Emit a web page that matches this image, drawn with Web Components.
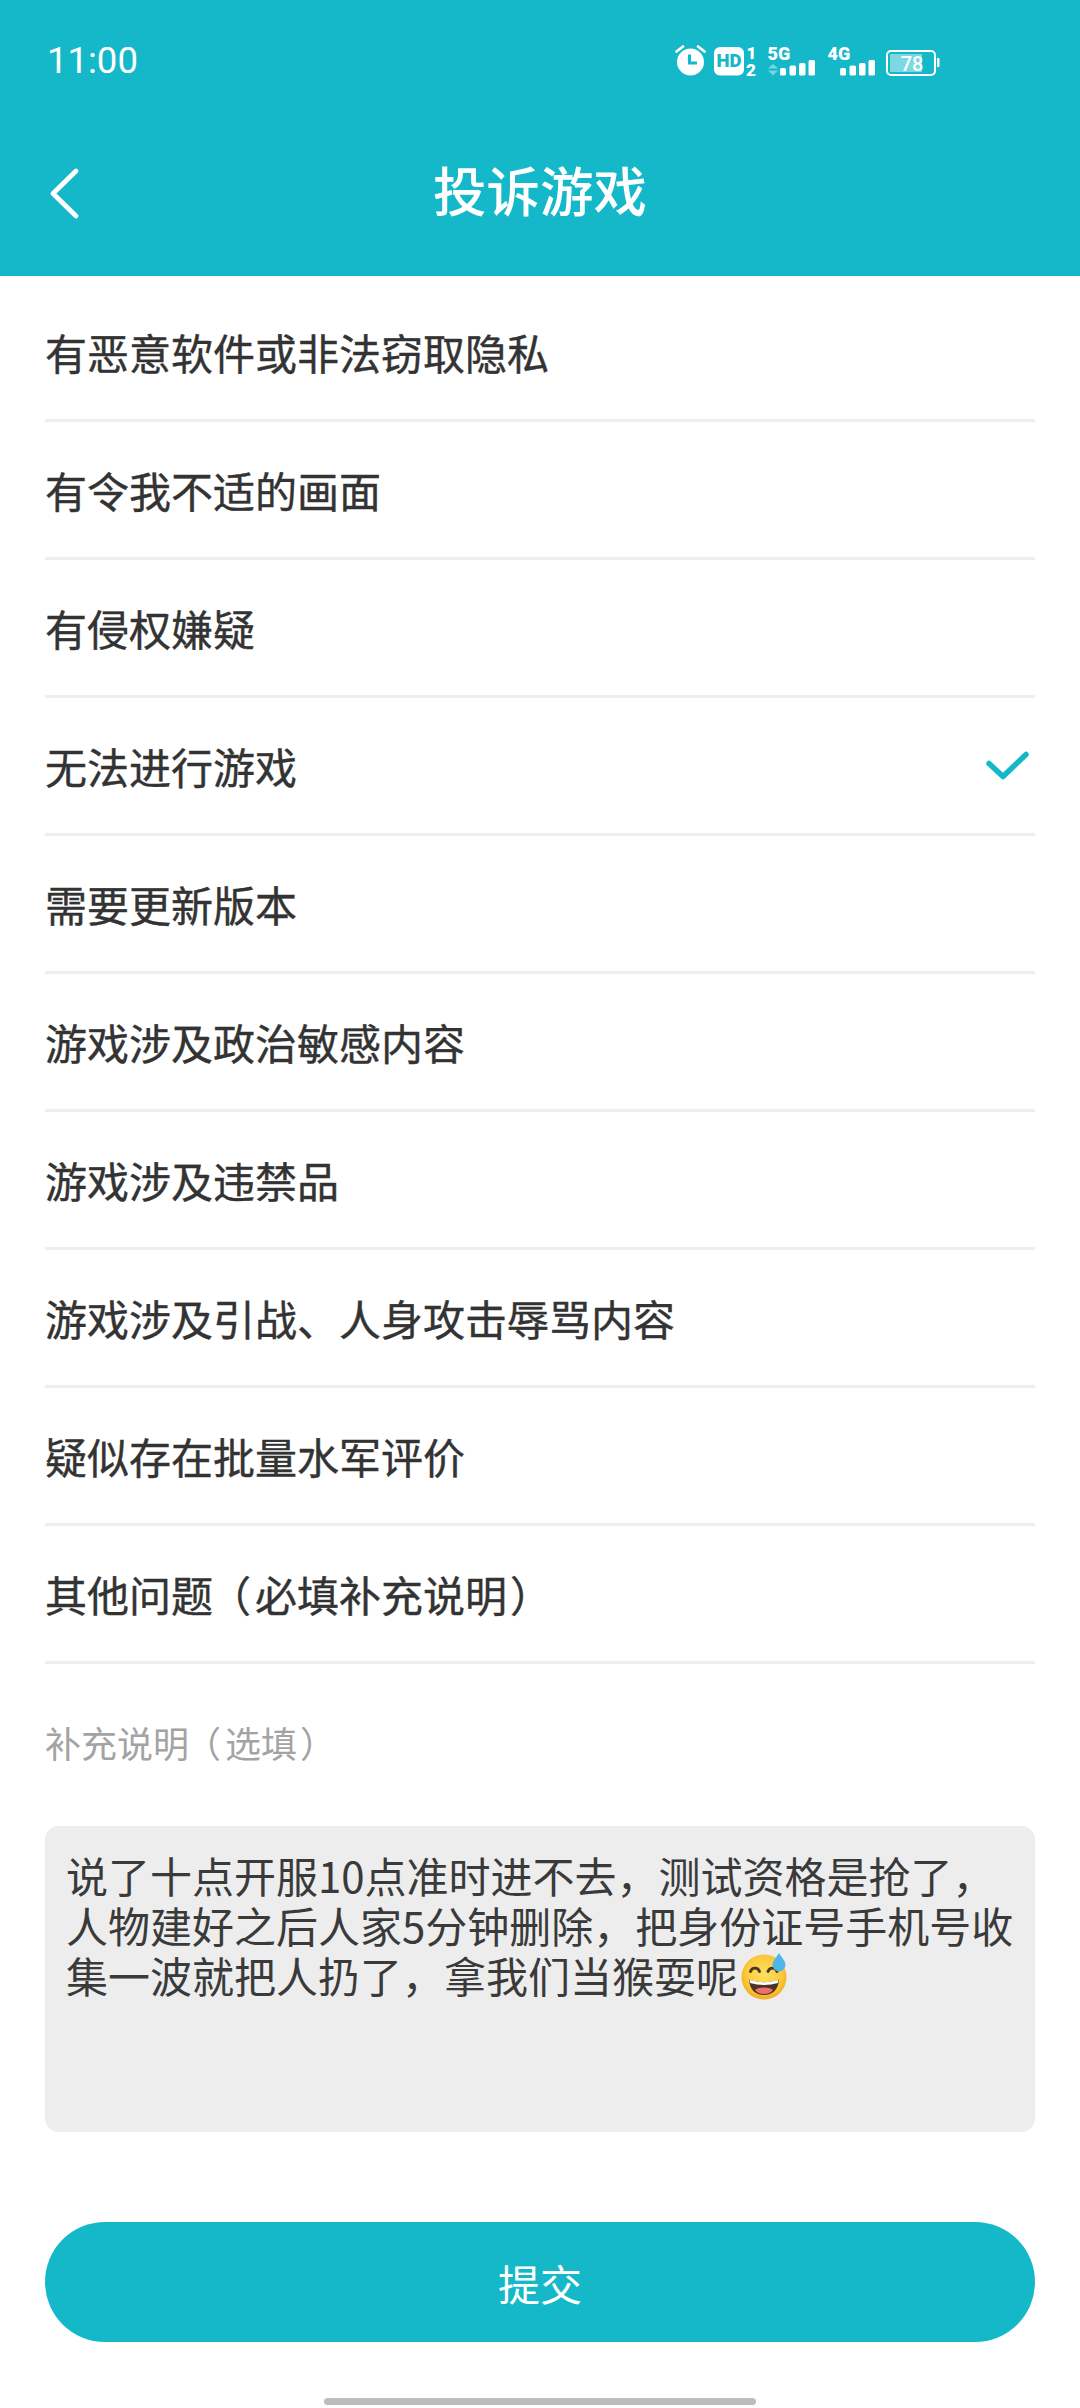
<!DOCTYPE html>
<html lang="zh-CN"><head><meta charset="utf-8"><title>投诉游戏</title>
<style>
html,body{margin:0;padding:0;background:#fff}
body{width:1080px;height:2408px;overflow:hidden;font-family:"Noto Sans CJK SC","Noto Sans",sans-serif;color:#333}
app-page{display:flex;flex-direction:column;width:1080px;height:2408px}
.pl{margin-left:-4px;margin-right:4px}
.pr{margin-left:3px;margin-right:-3px}
</style></head><body>
<app-page>
  <app-header title-text="投诉游戏"></app-header>
  <option-list>
    <option-row>有恶意软件或非法窃取隐私</option-row>
    <option-row>有令我不适的画面</option-row>
    <option-row>有侵权嫌疑</option-row>
    <option-row checked>无法进行游戏</option-row>
    <option-row>需要更新版本</option-row>
    <option-row>游戏涉及政治敏感内容</option-row>
    <option-row>游戏涉及违禁品</option-row>
    <option-row>游戏涉及引战、人身攻击辱骂内容</option-row>
    <option-row>疑似存在批量水军评价</option-row>
    <option-row>其他问题<span class="pl">（</span>必填补充说明<span class="pr">）</span></option-row>
  </option-list>
  <note-field><span slot="label">补充说明<span class="pl">（</span>选填<span class="pr">）</span></span>说了十点开服10点准时进不去，测试资格是抢了，人物建好之后人家5分钟删除，把身份证号手机号收集一波就把人扔了，拿我们当猴耍呢<sweat-emoji></sweat-emoji></note-field>
  <submit-button>提交</submit-button>
  <home-bar></home-bar>
</app-page>
<script>
function def(name, css, html){
  customElements.define(name, class extends HTMLElement{
    constructor(){super();const r=this.attachShadow({mode:'open'});r.innerHTML='<style>'+css+'</style>'+(typeof html==='function'?html(this):html);}
  });
}
const T='#15b8c8';
const bars=(a,b,c,d)=>`<rect x="${a}" y="68" width="6" height="7.500" rx="1.500" fill="#fff"/><rect x="${b}" y="65.500" width="6.500" height="10" rx="1.500" fill="#fff"/><rect x="${c}" y="63" width="6.500" height="12.500" rx="1.500" fill="#fff"/><rect x="${d}" y="60" width="6.500" height="15.500" rx="1.500" fill="#fff"/>`;
def('status-bar',`
:host{display:flex;align-items:center;height:122px;box-sizing:border-box;padding:0 0 0 47px;color:#fff}
.time{font:400 36.500px/1 Roboto,"Noto Sans",sans-serif}
svg{position:absolute;left:670px;top:40px;overflow:visible}
text{fill:#fff;font-family:Roboto,"Noto Sans",sans-serif;font-weight:900}
`,`<span class="time">11:00</span>
<svg width="280" height="44" viewBox="670 40 280 44">
  <circle cx="690.500" cy="62" r="13.500" fill="#fff"/>
  <path d="M676.500 51.500l6.500-5M704.500 51.500l-6.500-5" stroke="#fff" stroke-width="2.800" stroke-linecap="round" fill="none"/>
  <path d="M689.500 54.500v8.500h7.500" stroke="${T}" stroke-width="3" fill="none"/>
  <rect x="714" y="47" width="30" height="28.500" rx="6" fill="#fff"/>
  <text x="729" y="67" font-size="18.500" text-anchor="middle" style="fill:${T}">HD</text>
  <text x="751.500" y="58.500" font-size="17" text-anchor="middle">1</text>
  <text x="751" y="75.500" font-size="17" text-anchor="middle">2</text>
  <text x="767.500" y="59.500" font-size="18">5G</text>
  <path d="M773 64l5 4.500h-10zM773 75.500l5-5h-10z" fill="#fff" opacity=".42"/>
  ${bars(780,789.500,799,808.500)}
  <text x="827.500" y="60" font-size="18">4G</text>
  ${bars(840,849.500,859,868.500)}
  <rect x="887" y="51" width="48" height="24" rx="4" fill="none" stroke="#fff" stroke-width="2"/>
  <rect x="890" y="54" width="32" height="18" rx="1" fill="#fff" opacity=".45"/>
  <rect x="937" y="58" width="2.500" height="9" rx="1" fill="#fff"/>
  <text x="912" y="71" font-size="20" text-anchor="middle" style="font-weight:500">78</text>
</svg>`);
def('app-header',`
:host{display:block;background:${T};color:#fff}
.nav{position:relative;display:flex;align-items:center;justify-content:center;height:134px;margin-bottom:20px}
.title{font-size:53.500px;font-weight:500;line-height:1}
.back{position:absolute;left:48px;top:44px}
`,h=>`<status-bar></status-bar><div class="nav"><svg class="back" width="34" height="54" viewBox="0 0 34 54"><path d="M28 5 L5 27.500 L28 50" fill="none" stroke="#fff" stroke-width="4.800" stroke-linecap="round" stroke-linejoin="round"/></svg><span class="title">${h.getAttribute('title-text')}</span></div>`);
def('option-list',`:host{display:block;padding:8px 45px 0}`,`<slot></slot>`);
def('option-row',`
:host{display:flex;align-items:center;justify-content:space-between;height:138px;box-sizing:border-box;border-bottom:3px solid #eee;font-size:42px;font-weight:400;-webkit-text-stroke:.4px #333;color:#333}
span{white-space:nowrap}
svg{margin-right:5px;display:block}
`,h=>`<span><slot></slot></span>${h.hasAttribute('checked')?`<svg width="44" height="34" viewBox="0 0 44 34"><path d="M3 14.500 L17 27.500 L40 5.500" fill="none" stroke="${T}" stroke-width="5.500" stroke-linecap="round" stroke-linejoin="round"/></svg>`:''}`);
def('note-field',`
:host{display:block;padding:0 45px}
.label{font-size:36px;line-height:52px;color:#a3a3a3;padding-top:52px}
.box{margin-top:58px;height:306px;box-sizing:border-box;background:#ededed;border-radius:14px;padding:23.500px 20px 0 21px;font-size:42px;line-height:50px;color:#3a3a3a}
`,`<div class="label"><slot name="label"></slot></div><div class="box"><slot></slot></div>`);
def('sweat-emoji',`:host{display:inline-block;width:48px;height:48px;margin-left:3px;vertical-align:-7px}svg{display:block}`,`
<svg width="48" height="48" viewBox="0 0 48 48">
<defs><radialGradient id="f" cx=".5" cy=".45" r=".55"><stop offset="0" stop-color="#fde164"/><stop offset=".75" stop-color="#fcc93a"/><stop offset="1" stop-color="#f2a91f"/></radialGradient></defs>
<circle cx="23" cy="25" r="22.500" fill="url(#f)"/>
<path d="M8 27.500c10 3.500 20 3.500 30 0c-.5 11-7.500 15.500-15 15.500S8.500 38.500 8 27.500z" fill="#4a3423"/>
<path d="M8.500 27.800c10 3.300 19 3.300 29 0l-.5 3.200c-9 2.600-19 2.600-28 0z" fill="#fff"/>
<path d="M14 38c2.500-3.500 15.500-3.500 18 0c-2.500 3-5.500 4-9 4s-6.500-1-9-4z" fill="#ef6f6c"/>
<path d="M9.500 19.500c1.500-4.500 7.500-4.500 9 0M27 19.500c1.500-4.500 7.500-4.500 9 0" fill="none" stroke="#4a3423" stroke-width="2.800" stroke-linecap="round"/>
<path d="M38 1c2.800 4.500 6.500 8 6.500 12a6.500 6.500 0 0 1-13 0c0-4 3.700-7.500 6.500-12z" fill="#4fb6ec"/>
</svg>`);
def('submit-button',`
:host{display:flex;align-items:center;justify-content:center;height:120px;margin:90px 45px 0;border-radius:60px;background:${T};color:#fff;font-size:42px}
`,`<slot></slot>`);
def('home-bar',`
:host{display:block;width:432px;height:7px;margin:56px auto 0;border-radius:4px;background:#bdbdbd}
`,``);
</script>
</body></html>
